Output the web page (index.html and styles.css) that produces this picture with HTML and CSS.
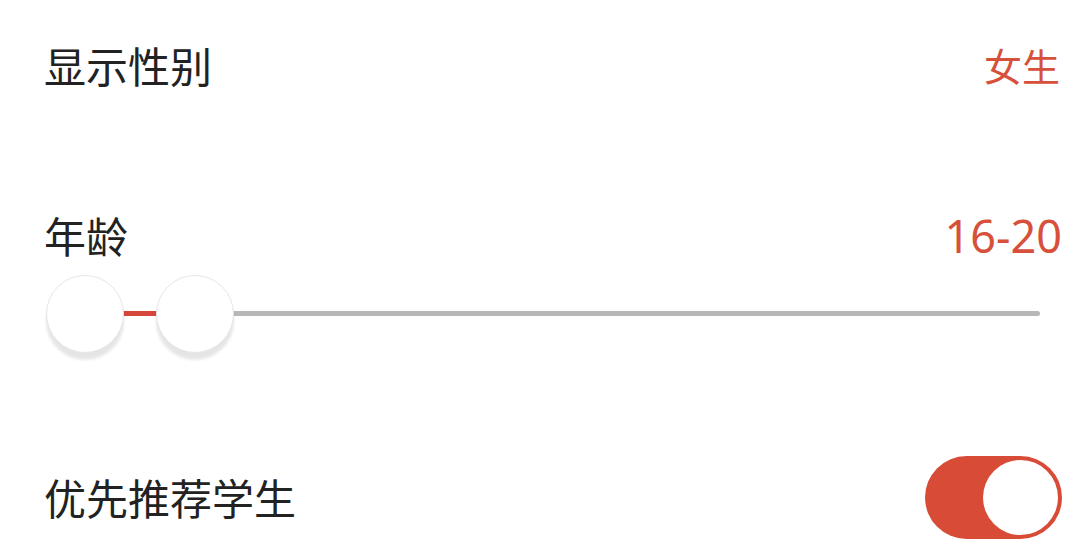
FILE: index.html
```html
<!DOCTYPE html>
<html lang="zh">
<head>
<meta charset="utf-8">
<link rel="stylesheet" href="styles.css">
</head>
<body>
<div class="page">
  <div class="row row-gender">
    <span class="label">显示性别</span>
    <span class="value">女生</span>
  </div>
  <div class="row row-age">
    <span class="label">年龄</span>
    <span class="value num">16-20</span>
  </div>
  <div class="slider">
    <div class="track"></div>
    <div class="range" style="left: 78px; width: 40px;"></div>
    <div class="thumb" style="left: 2px;"></div>
    <div class="thumb" style="left: 112px;"></div>
  </div>
  <div class="row row-student">
    <span class="label">优先推荐学生</span>
    <div class="toggle"><div class="knob"></div></div>
  </div>
</div>
</body>
</html>
```

FILE: styles.css
```css
html, body {
  margin: 0;
  padding: 0;
  background: #ffffff;
}
.page {
  width: 1080px;
  height: 551px;
  box-sizing: border-box;
  padding: 0 18px 0 44px;
  font-family: "Noto Sans CJK SC", "Noto Sans", sans-serif;
  overflow: hidden;
}
.row {
  display: flex;
  justify-content: space-between;
  align-items: center;
}
.label {
  font-size: 42px;
  color: #222222;
  line-height: 1;
}
.value {
  font-size: 38px;
  color: #d6503b;
  line-height: 1;
  margin-right: 2px;
}
.row-gender {
  height: 130px;
}
.row-age {
  margin-top: 75px;
  height: 60px;
}
.value.num {
  font-family: "Noto Sans", "Open Sans", sans-serif;
  font-size: 45px;
  margin-right: 0;
}
.slider {
  position: relative;
  margin-top: 10px;
  height: 80px;
  margin-right: 22px;
}
.track {
  position: absolute;
  left: 2px;
  right: 0;
  top: 36px;
  height: 5px;
  background: #b7b7b7;
  border-radius: 3px;
}
.range {
  position: absolute;
  top: 36px;
  height: 5px;
  background: #d6473a;
}
.thumb {
  position: absolute;
  top: 0;
  width: 76px;
  height: 76px;
  border-radius: 50%;
  background: #ffffff;
  border: 1px solid #e6e6e6;
  box-shadow: 0 7px 3px rgba(0, 0, 0, 0.1);
}
.row-student {
  margin-top: 97px;
  height: 90px;
}
.toggle {
  width: 137px;
  height: 83px;
  border-radius: 42px;
  background: #d84b37;
  box-sizing: border-box;
  padding: 4px;
  display: flex;
  justify-content: flex-end;
  align-items: center;
}
.knob {
  width: 75px;
  height: 75px;
  border-radius: 50%;
  background: #ffffff;
}
```
